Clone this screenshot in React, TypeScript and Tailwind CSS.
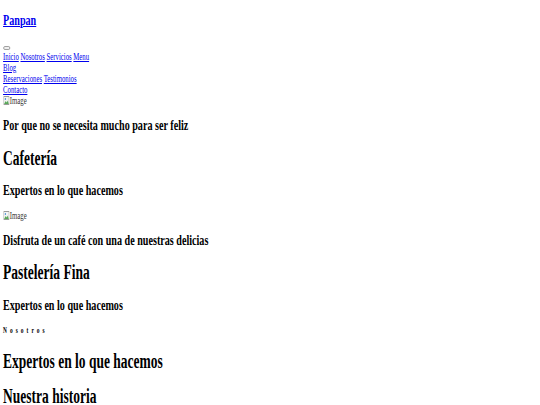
import React from 'react'

const links = [['Inicio', 'Nosotros', 'Servicios', 'Menu'], ['Blog'], ['Reservaciones', 'Testimonios'], ['Contacto']]

function BrokenImage({ className = '' }: { className?: string }) {
  return (
    <div className={`flex items-center text-[10px] leading-[11px] text-[#333] ${className}`}>
      <svg width="9" height="9" viewBox="0 0 9 9" className="mr-px">
        <rect x="0.5" y="0.5" width="8" height="8" fill="#f4f4f4" stroke="#9a9a9a" />
        <path d="M1 8 L3.5 5 L5 6.5 L6.5 4.5 L8 8 Z" fill="#5aa85a" />
        <circle cx="3" cy="3" r="1" fill="#4a90d9" />
      </svg>
      <span>Image</span>
    </div>
  )
}

export default function App() {
  return (
    <div className="h-[405px] w-[540px] overflow-hidden bg-white">
      <div
        className="w-[800px] origin-top-left scale-x-[0.675] pl-[4.5px] text-black"
        style={{ fontFamily: '"Liberation Serif", "Times New Roman", serif' }}
      >
        <h1 className="mt-[12px] text-[15px] font-bold leading-[16px]">
          <a href="#" className="text-[#0000ee] underline">Panpan</a>
        </h1>

        <button className="mt-[18px] block h-[4px] w-[10px] rounded-[2px] border border-[#8f8f8f] bg-[#efefef]" />

        <nav className="mt-[1px] text-[10px] leading-[11px]">
          {links.map((row, i) => (
            <div key={i} className="flex gap-[2.5px]">
              {row.map(l => (
                <a key={l} href="#" className="text-[#0000ee] underline">{l}</a>
              ))}
            </div>
          ))}
        </nav>
        <BrokenImage />

        <h3 className="mt-[11px] text-[15px] font-bold leading-[16px]">Por que no se necesita mucho para ser feliz</h3>
        <h1 className="mt-[14px] text-[20px] font-bold leading-[23px]">Cafetería</h1>
        <h3 className="mt-[12px] text-[15px] font-bold leading-[16px]">Expertos en lo que hacemos</h3>

        <BrokenImage className="mt-[12px]" />
        <h3 className="mt-[11px] text-[15px] font-bold leading-[16px]">Disfruta de un café con una de nuestras delicias</h3>
        <h1 className="mt-[13px] text-[20px] font-bold leading-[23px]">Pastelería Fina</h1>
        <h3 className="mt-[13px] text-[15px] font-bold leading-[16px]">Expertos en lo que hacemos</h3>

        <h6 className="mt-[13px] text-[8px] font-bold leading-[10px] tracking-[4.5px]">Nosotros</h6>
        <h2 className="mt-[14px] text-[20px] font-bold leading-[23px]">Expertos en lo que hacemos</h2>
        <h2 className="mt-[12px] text-[20px] font-bold leading-[23px]">Nuestra historia</h2>
      </div>
    </div>
  )
}
